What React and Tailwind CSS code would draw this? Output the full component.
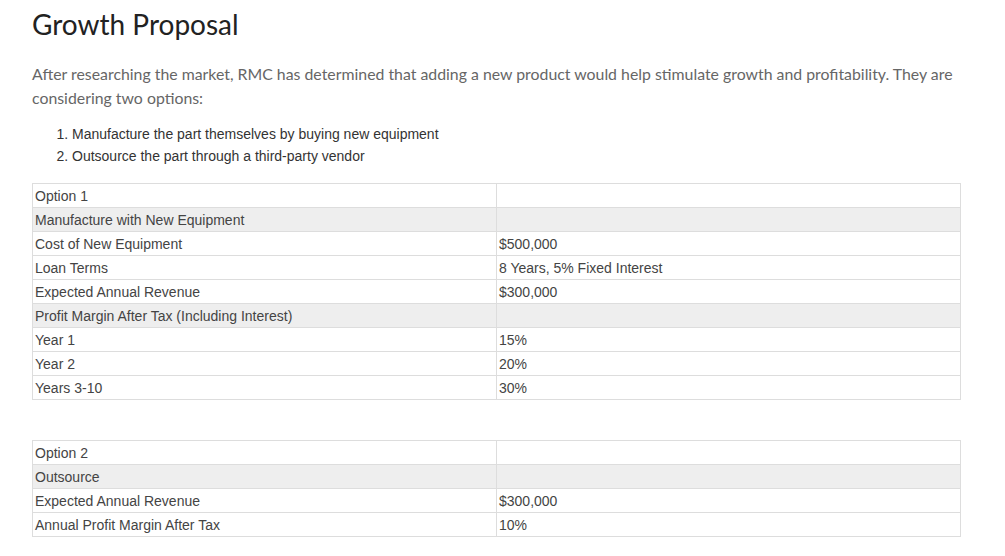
const option1 = [
  { label: "Option 1", value: "" },
  { label: "Manufacture with New Equipment", value: "", shaded: true },
  { label: "Cost of New Equipment", value: "$500,000" },
  { label: "Loan Terms", value: "8 Years, 5% Fixed Interest" },
  { label: "Expected Annual Revenue", value: "$300,000" },
  { label: "Profit Margin After Tax (Including Interest)", value: "", shaded: true },
  { label: "Year 1", value: "15%" },
  { label: "Year 2", value: "20%" },
  { label: "Years 3-10", value: "30%" },
];

const option2 = [
  { label: "Option 2", value: "" },
  { label: "Outsource", value: "", shaded: true },
  { label: "Expected Annual Revenue", value: "$300,000" },
  { label: "Annual Profit Margin After Tax", value: "10%" },
];

function OptionTable({ rows }) {
  return (
    <table className="w-[929px] table-fixed border-collapse font-['Liberation_Sans',Arial,sans-serif] text-[14px] text-[#444]">
      <tbody>
        {rows.map((row) => (
          <tr key={row.label} className={row.shaded ? "bg-[#eeeeee]" : "bg-white"}>
            <td className="h-6 border border-[#dddddd] px-0.5 leading-none">{row.label}</td>
            <td className="h-6 border border-[#dddddd] px-0.5 leading-none">{row.value}</td>
          </tr>
        ))}
      </tbody>
    </table>
  );
}

export default function App() {
  return (
    <div className="min-h-screen bg-white pl-8 pr-8 pt-1.5">
      <h1 className="font-['Lato',sans-serif] text-[28px] leading-[36px] text-[#222]">Growth Proposal</h1>

      <p className="mt-5 font-['Lato',sans-serif] text-[15.85px] leading-6 text-[#666]">
        After researching the market, RMC has determined that adding a new product would help stimulate growth and
        profitability. They are considering two options:
      </p>

      <ol className="mt-[13px] list-decimal pl-10 font-['Liberation_Sans',Arial,sans-serif] text-[14px] leading-[22px] text-[#333]">
        <li>Manufacture the part themselves by buying new equipment</li>
        <li>Outsource the part through a third-party vendor</li>
      </ol>

      <div className="mt-4 flex flex-col gap-10">
        <OptionTable rows={option1} />
        <OptionTable rows={option2} />
      </div>
    </div>
  );
}
